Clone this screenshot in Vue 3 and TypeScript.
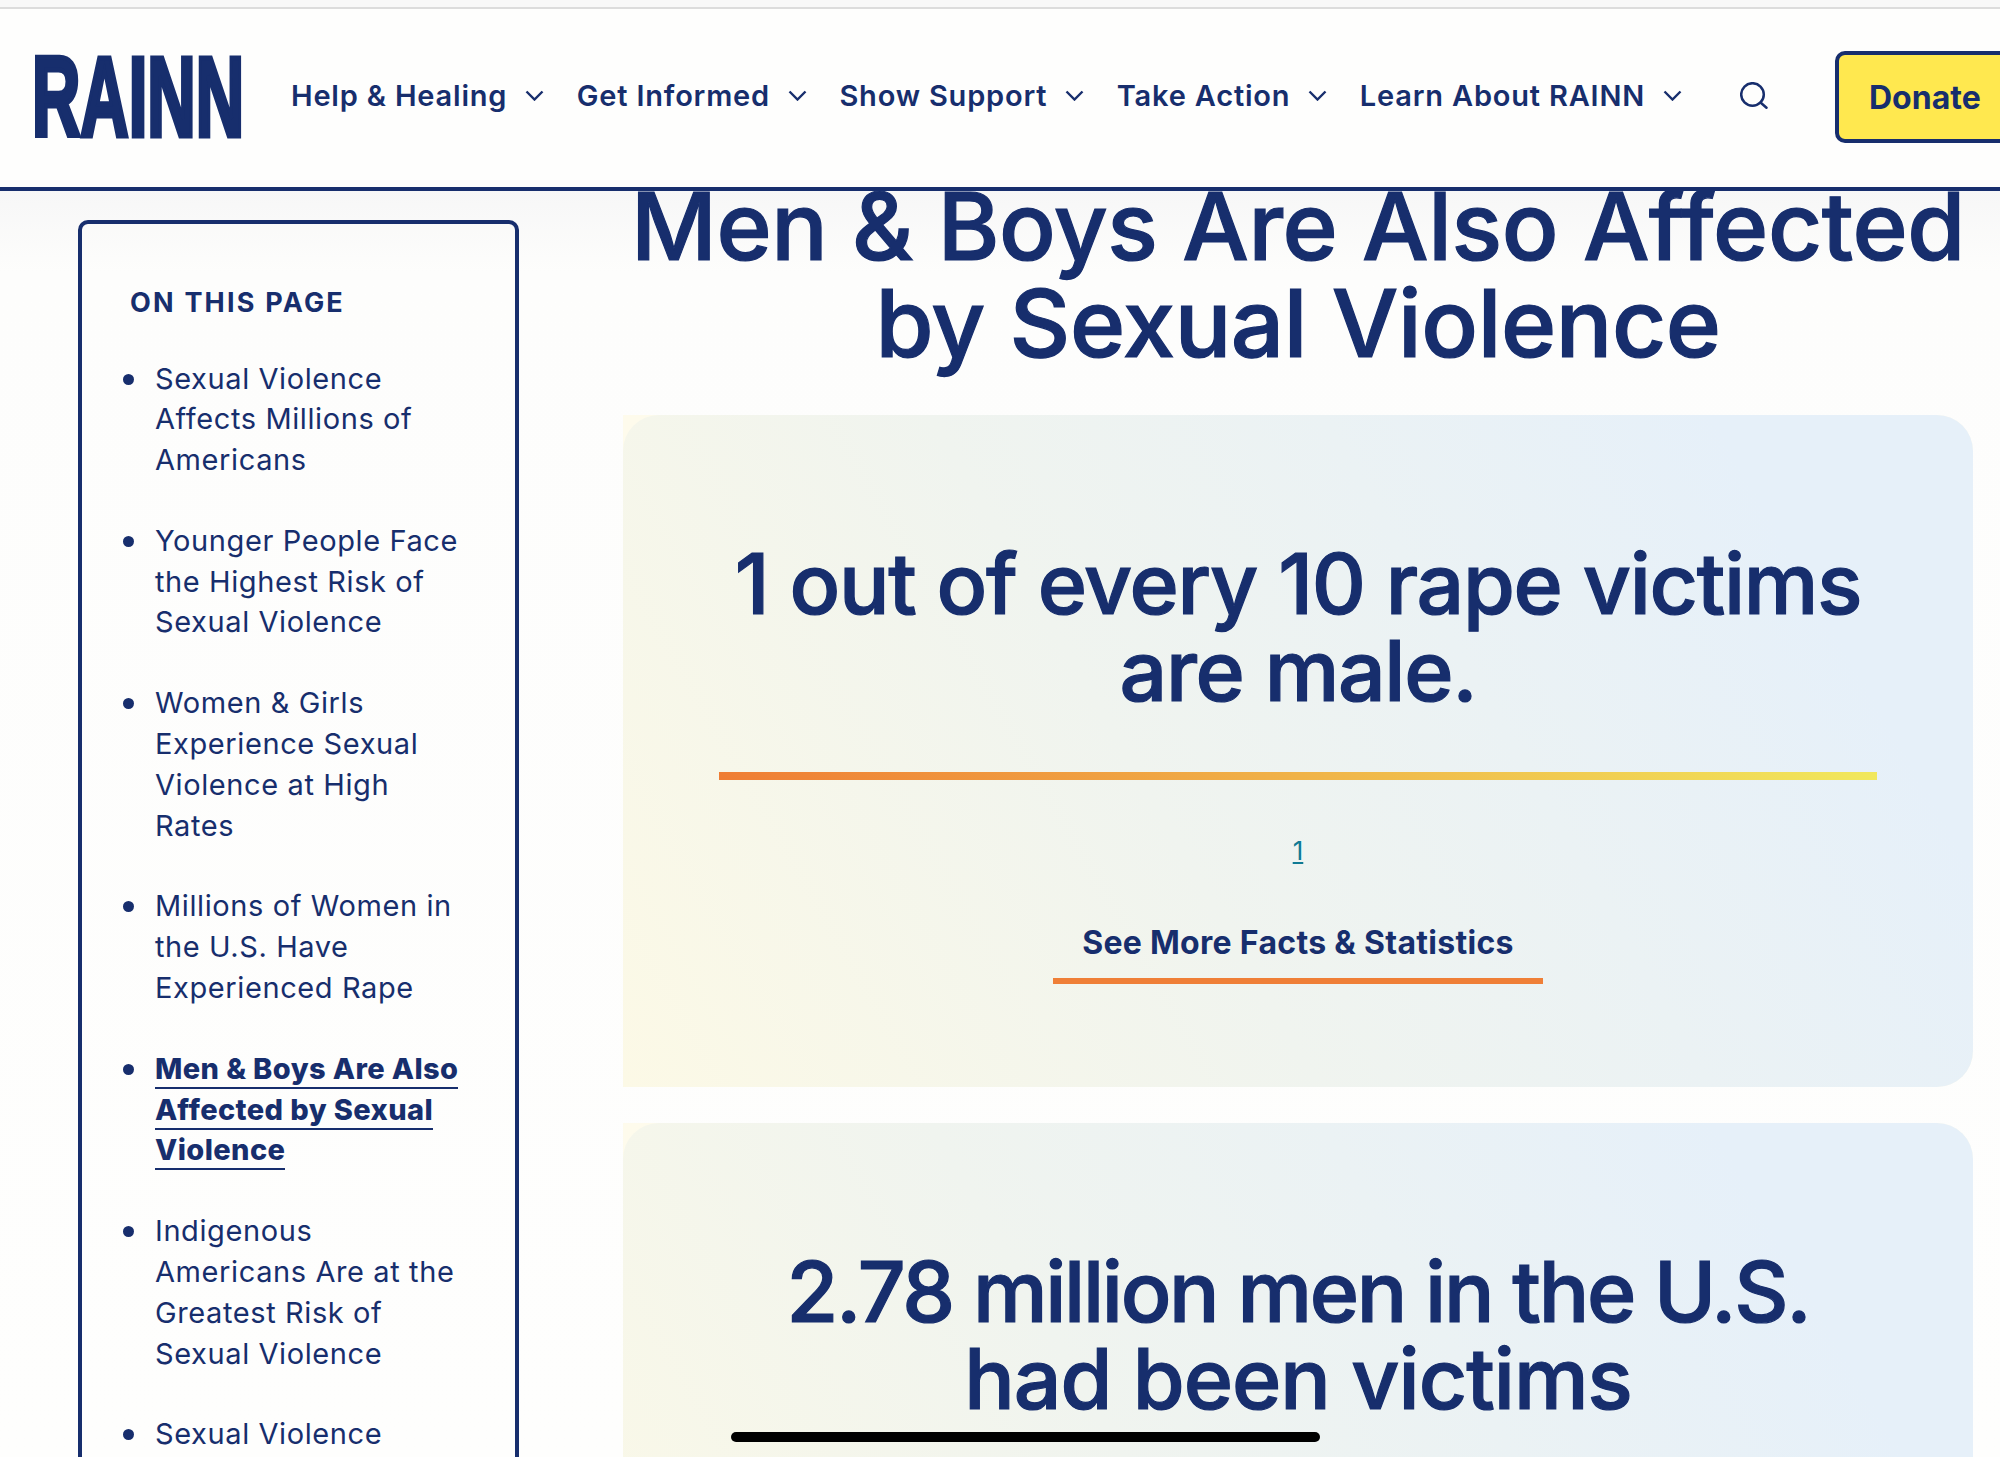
<script setup lang="ts">
const navItems: string[] = ['Help & Healing', 'Get Informed', 'Show Support', 'Take Action', 'Learn About RAINN']
interface TocItem { text: string; active?: boolean }
const toc: TocItem[] = [
  { text: 'Sexual Violence Affects Millions of Americans' },
  { text: 'Younger People Face the Highest Risk of Sexual Violence' },
  { text: 'Women & Girls Experience Sexual Violence at High Rates' },
  { text: 'Millions of Women in the U.S. Have Experienced Rape' },
  { text: 'Men & Boys Are Also Affected by Sexual Violence', active: true },
  { text: 'Indigenous Americans Are at the Greatest Risk of Sexual Violence' },
  { text: 'Sexual Violence' }
]
</script>

<template>
  <div class="page">
    <div class="topstrip"></div>
    <header class="header">
      <svg class="logo" width="208" height="82" viewBox="0 0 208 82" role="img" aria-label="RAINN">
        <text x="-2" y="82" textLength="212" lengthAdjust="spacingAndGlyphs" class="logo-text">RAINN</text>
      </svg>
      <nav class="nav">
        <a v-for="item in navItems" :key="item" class="nav-item">
          <span>{{ item }}</span>
          <svg width="19" height="11" viewBox="0 0 19 11" fill="none"><path d="M1.5 1.5 9.5 9.5l8-8" stroke="#172e6d" stroke-width="2.4"/></svg>
        </a>
      </nav>
      <svg class="search" width="28" height="27" viewBox="0 0 28 27" fill="none">
        <circle cx="12.5" cy="12.5" r="11.3" stroke="#172e6d" stroke-width="2.5"/>
        <path d="m20.5 20.5 6 5.2" stroke="#172e6d" stroke-width="2.5" stroke-linecap="round"/>
      </svg>
      <a class="donate">Donate</a>
    </header>
    <div class="body">
      <aside class="side">
        <h2 class="side-title">ON THIS PAGE</h2>
        <ul class="toc">
          <li v-for="item in toc" :key="item.text" :class="{ active: item.active }"><a>{{ item.text }}</a></li>
        </ul>
      </aside>
      <main class="main">
        <h1 class="title">Men &amp; Boys Are Also Affected<br>by Sexual Violence</h1>
        <div class="card-wrap">
          <section class="card">
            <h2 class="stat">1 out of every 10 rape victims<br>are male.</h2>
            <div class="rule"></div>
            <a class="ref">1</a>
            <a class="more">See More Facts &amp; Statistics</a>
          </section>
        </div>
        <div class="card-wrap second">
          <section class="card">
            <h2 class="stat"><span class="tight">2.78 million men in the U.S.</span><br><span class="loose">had been victims</span></h2>
          </section>
        </div>
      </main>
    </div>
    <div class="home"></div>
  </div>
</template>

<style>
html, body { margin: 0; background: #fff; }
</style>

<style scoped>
.page {
  position: relative;
  width: 2000px;
  height: 1457px;
  overflow: hidden;
  font-family: Inter, "Liberation Sans", sans-serif;
  color: #172e6d;
  background: linear-gradient(#f7f7f7 191px, #fdfdfc 272px, #fefefd 100%);
}
.topstrip { height: 7px; background: #f8f8f8; border-bottom: 2px solid #dcdcdc; }
.header {
  position: relative;
  z-index: 2;
  box-sizing: border-box;
  height: 182px;
  display: flex;
  align-items: center;
  padding: 0 0 6px 34px;
  background: #fefefd;
  border-bottom: 4px solid #172e6d;
  white-space: nowrap;
}
.logo { flex: none; overflow: visible; }
.logo-text {
  font-family: "Liberation Sans", sans-serif;
  font-weight: 700;
  font-size: 113px;
  fill: #172e6d;
  stroke: #172e6d;
  stroke-width: 5px;
}
.nav { display: flex; margin-left: 49px; gap: 32.5px; }
.nav-item { display: flex; align-items: center; gap: 18px; font-size: 29px; font-weight: 600; letter-spacing: 0.8px; }
.search { margin-left: auto; flex: none; }
.donate {
  box-sizing: border-box;
  flex: none;
  margin-left: 67px;
  margin-right: -55px;
  margin-top: 4px;
  width: 220px;
  height: 92px;
  padding-left: 30px;
  display: flex;
  align-items: center;
  background: #ffe84f;
  border: 4px solid #172e6d;
  border-radius: 10px;
  font-size: 32px;
  font-weight: 700;
}
.body { display: flex; align-items: flex-start; padding: 29px 27px 0 78px; }
.side {
  box-sizing: border-box;
  flex: none;
  width: 441px;
  height: 1300px;
  padding: 62px 46px 0 48px;
  border: 4px solid #172e6d;
  border-radius: 10px;
}
.side-title { margin: 0; font-size: 27px; line-height: 34px; font-weight: 700; letter-spacing: 2.2px; }
.toc { margin: 38.5px 0 0; padding: 0 0 0 25px; list-style: none; font-size: 29px; letter-spacing: 0.6px; line-height: 40.8px; }
.toc li { position: relative; margin-bottom: 40px; }
.toc li::before {
  content: "";
  position: absolute;
  left: -32.5px;
  top: 15px;
  width: 11px;
  height: 11px;
  border-radius: 50%;
  background: #172e6d;
}
.toc li.active { font-weight: 800; letter-spacing: 0.4px; }
.toc li.active a { border-bottom: 2px solid #172e6d; padding-bottom: 1px; }
.main { flex: 1; margin-left: 104px; margin-top: -29px; }
.title {
  margin: -13px 0 0;
  text-align: center;
  font-size: 94px;
  line-height: 97px;
  font-weight: 500;
  letter-spacing: -0.4px;
  -webkit-text-stroke: 1.2px #172e6d;
}
.card-wrap {
  margin-top: 43px;
  height: 672px;
  background: #fefbec;
  border-radius: 0 36px 36px 0;
}
.card-wrap.second { margin-top: 36px; }
.card {
  height: 100%;
  box-sizing: border-box;
  padding: 126px 96px 0;
  border-radius: 36px 36px 36px 0;
  background: linear-gradient(60deg, #fcf9e6 0%, #f0f4ef 40%, #e6f0f9 85%);
  display: flex;
  flex-direction: column;
  align-items: center;
}
.stat {
  margin: 0;
  text-align: center;
  font-size: 84px;
  line-height: 86.5px;
  font-weight: 500;
  letter-spacing: -1.3px;
  -webkit-text-stroke: 1.2px #172e6d;
}
.tight { letter-spacing: -2.3px; }
.loose { letter-spacing: -1px; }
.rule { width: 100%; height: 8px; margin-top: 58px; background: linear-gradient(90deg, #ef7d34, #f1e85c); }
.ref { margin-top: 53px; font-size: 26px; line-height: 36px; color: #0f7a94; text-decoration: underline; }
.more {
  margin-top: 54px;
  box-sizing: border-box;
  width: 490px;
  text-align: center;
  font-size: 32px;
  line-height: 40px;
  font-weight: 700;
  letter-spacing: 0.3px;
  padding-bottom: 15px;
  border-bottom: 6px solid #ef7f37;
}
.home {
  position: absolute;
  left: 731px;
  top: 1432px;
  width: 589px;
  height: 10px;
  border-radius: 5px;
  background: #000;
  z-index: 3;
}
</style>
